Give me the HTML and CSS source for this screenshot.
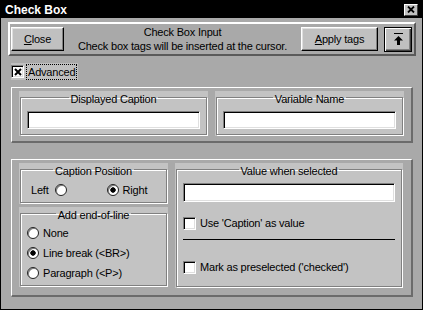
FILE: index.html
```html
<!DOCTYPE html>
<html lang="en">
<head>
  <meta charset="UTF-8">
  <title>Check Box</title>
  <link rel="stylesheet" href="styles.css">
</head>
<body>
  <div class="window">
    <div class="titlebar">
      <span class="title">Check Box</span>
      <span class="x-btn"><svg width="8" height="7" viewBox="0 0 8 7"><path d="M1 0.5L7 6.5M7 0.5L1 6.5" stroke="#000" stroke-width="1.8"/></svg></span>
    </div>

    <div class="toolbar">
      <button class="btn close"><u>C</u>lose</button>
      <div class="info">Check Box Input<br>Check box tags will be inserted at the cursor.</div>
      <button class="btn apply"><u>A</u>pply tags</button>
      <button class="btn icon-btn">
        <svg width="9" height="12" viewBox="0 0 9 12"><rect x="0" y="0" width="9" height="1"/><path d="M4.5 3L9 7.5H6V12H3V7.5H0Z"/></svg>
      </button>
    </div>

    <div class="adv-row">
      <label class="adv">
        <span class="chk"><svg width="8" height="8" viewBox="0 0 8 8"><path d="M1 1L7 7M7 1L1 7" stroke="#000" stroke-width="2"/></svg></span>
        <span class="focus">Advanced</span>
      </label>
    </div>

    <div class="panel panel-top">
      <div class="group half">
        <fieldset>
          <legend>Displayed Caption</legend>
          <input class="field" type="text">
        </fieldset>
      </div>
      <div class="group half">
        <fieldset>
          <legend>Variable Name</legend>
          <input class="field" type="text">
        </fieldset>
      </div>
    </div>

    <div class="panel panel-bottom">
      <div class="col">
        <div class="group pos-group">
          <fieldset>
            <legend>Caption Position</legend>
            <div class="pos-row">
              <label class="opt">Left <span class="radio"></span></label>
              <label class="opt opt-right"><span class="radio on"></span> Right</label>
            </div>
          </fieldset>
        </div>
        <div class="group eol-group">
          <fieldset>
            <legend>Add end-of-line</legend>
            <div class="eol-list">
              <label class="opt row"><span class="radio"></span>None</label>
              <label class="opt row"><span class="radio on"></span>Line break (&lt;BR&gt;)</label>
              <label class="opt row"><span class="radio"></span>Paragraph (&lt;P&gt;)</label>
            </div>
          </fieldset>
        </div>
      </div>
      <div class="group value-group">
        <fieldset>
          <legend>Value when selected</legend>
          <input class="field tall" type="text">
          <label class="check-row first"><span class="chk"></span>Use 'Caption' as value</label>
          <div class="sep"></div>
          <label class="check-row second"><span class="chk"></span>Mark as preselected ('checked')</label>
        </fieldset>
      </div>
    </div>
  </div>
</body>
</html>
```

FILE: styles.css
```css
body { margin: 0; font-family: "Liberation Sans", Arial, sans-serif; font-size: 11px; letter-spacing: -0.2px; color: #000; }
.window { width: 423px; height: 310px; box-sizing: border-box; border: 1px solid #000; background: #a9a9a9; }

.titlebar { height: 17px; background: #000; display: flex; align-items: center; justify-content: space-between; padding: 0 4px 0 4px; }
.title { color: #fff; font-weight: bold; font-size: 12px; letter-spacing: 0; }
.x-btn { width: 14px; height: 12px; box-sizing: border-box; background: #c0c0c0; border: 1px solid; border-color: #fff #404040 #404040 #fff; display: flex; align-items: center; justify-content: center; }

.toolbar { margin: 4px 0 0 7px; width: 408px; height: 34px; box-sizing: border-box; border: 2px solid; border-color: #fff #5a5a5a #5a5a5a #fff; display: flex; align-items: center; padding: 0 2px 0 1px; }
.btn { font: inherit; letter-spacing: inherit; color: #000; height: 24px; padding: 0; background: #c0c0c0; border: 1px solid; border-color: #fff #000 #000 #fff; box-shadow: inset -1px -1px 0 #808080, inset 1px 1px 0 #dfdfdf; }
.close { width: 53px; }
.info { flex: 1; text-align: center; line-height: 14px; }
.apply { width: 77px; }
.icon-btn { width: 28px; height: 25px; margin-left: 6px; border: 1px solid #000; box-shadow: inset 1px 1px 0 #fff, inset -1px -1px 0 #404040, inset -2px -2px 0 #808080; display: flex; align-items: center; justify-content: center; }

.adv-row { margin: 7px 0 0 10px; height: 17px; }
.adv { display: inline-flex; align-items: center; height: 17px; background: #c0c0c0; padding-right: 2px; }
.focus { outline: 1px dotted #000; margin-left: 3px; padding: 0 1px; line-height: 14px; }

.chk { width: 13px; height: 13px; box-sizing: border-box; background: #fff; border: 1px solid; border-color: #808080 #fff #fff #808080; box-shadow: inset 1px 1px 0 #000, inset -1px -1px 0 #dfdfdf; display: flex; align-items: center; justify-content: center; flex: none; }

.panel { margin: 7px 0 0 10px; width: 402px; box-sizing: border-box; border-style: solid; border-width: 1px 2px 2px 1px; border-color: #fff #6b6b6b #6b6b6b #fff; display: flex; align-items: flex-start; gap: 7px; }
.panel-top { height: 56px; padding: 3px 7px 0 7px; }
.panel-bottom { margin-top: 16px; height: 138px; padding: 3px 8px 0 7px; }

.group { background: #c3c3c3; padding: 0 1px 1px 1px; box-sizing: border-box; }
.group fieldset { margin: 0; padding: 0 6px; height: 100%; box-sizing: border-box; min-width: 0; border: 1px solid #808080; box-shadow: inset 1px 1px 0 #fff, 1px 1px 0 #fff; }
.group legend { margin: 0 auto; padding: 4px 2px 0; line-height: 9px; }
.half { width: 189px; height: 45px; }

.field { display: block; width: 100%; height: 18px; margin: 7px 0 0; box-sizing: border-box; background: #fff; border: 1px solid; border-color: #808080 #fff #fff #808080; box-shadow: inset 1px 1px 0 #000, inset -1px -1px 0 #dfdfdf; outline: none; }
.field.tall { height: 19px; }

.col { width: 149px; display: flex; flex-direction: column; gap: 3px; }
.pos-group { height: 41px; }
.eol-group { height: 80px; }
.value-group { width: 228px; height: 125px; }

.opt { display: flex; align-items: center; gap: 4px; }
.radio { width: 12px; height: 12px; box-sizing: border-box; border-radius: 50%; background: #fff; border: 1px solid #222; box-shadow: inset 1px 1px 0 #808080; flex: none; }
.radio.on { background: radial-gradient(circle, #000 0 2.4px, #fff 3px); }

.pos-row { display: flex; align-items: center; height: 14px; margin-top: 7px; padding-left: 4px; }
.pos-row .opt:first-child { gap: 6px; }
.opt-right { margin-left: 40px; }

.eol-list { margin-top: 3px; }
.row { height: 20px; }

.check-row { display: flex; align-items: center; gap: 4px; height: 14px; }
.check-row.first { margin-top: 14px; }
.check-row.second { margin-top: 20px; }
.sep { height: 1px; background: #000; margin-top: 9px; }
```
